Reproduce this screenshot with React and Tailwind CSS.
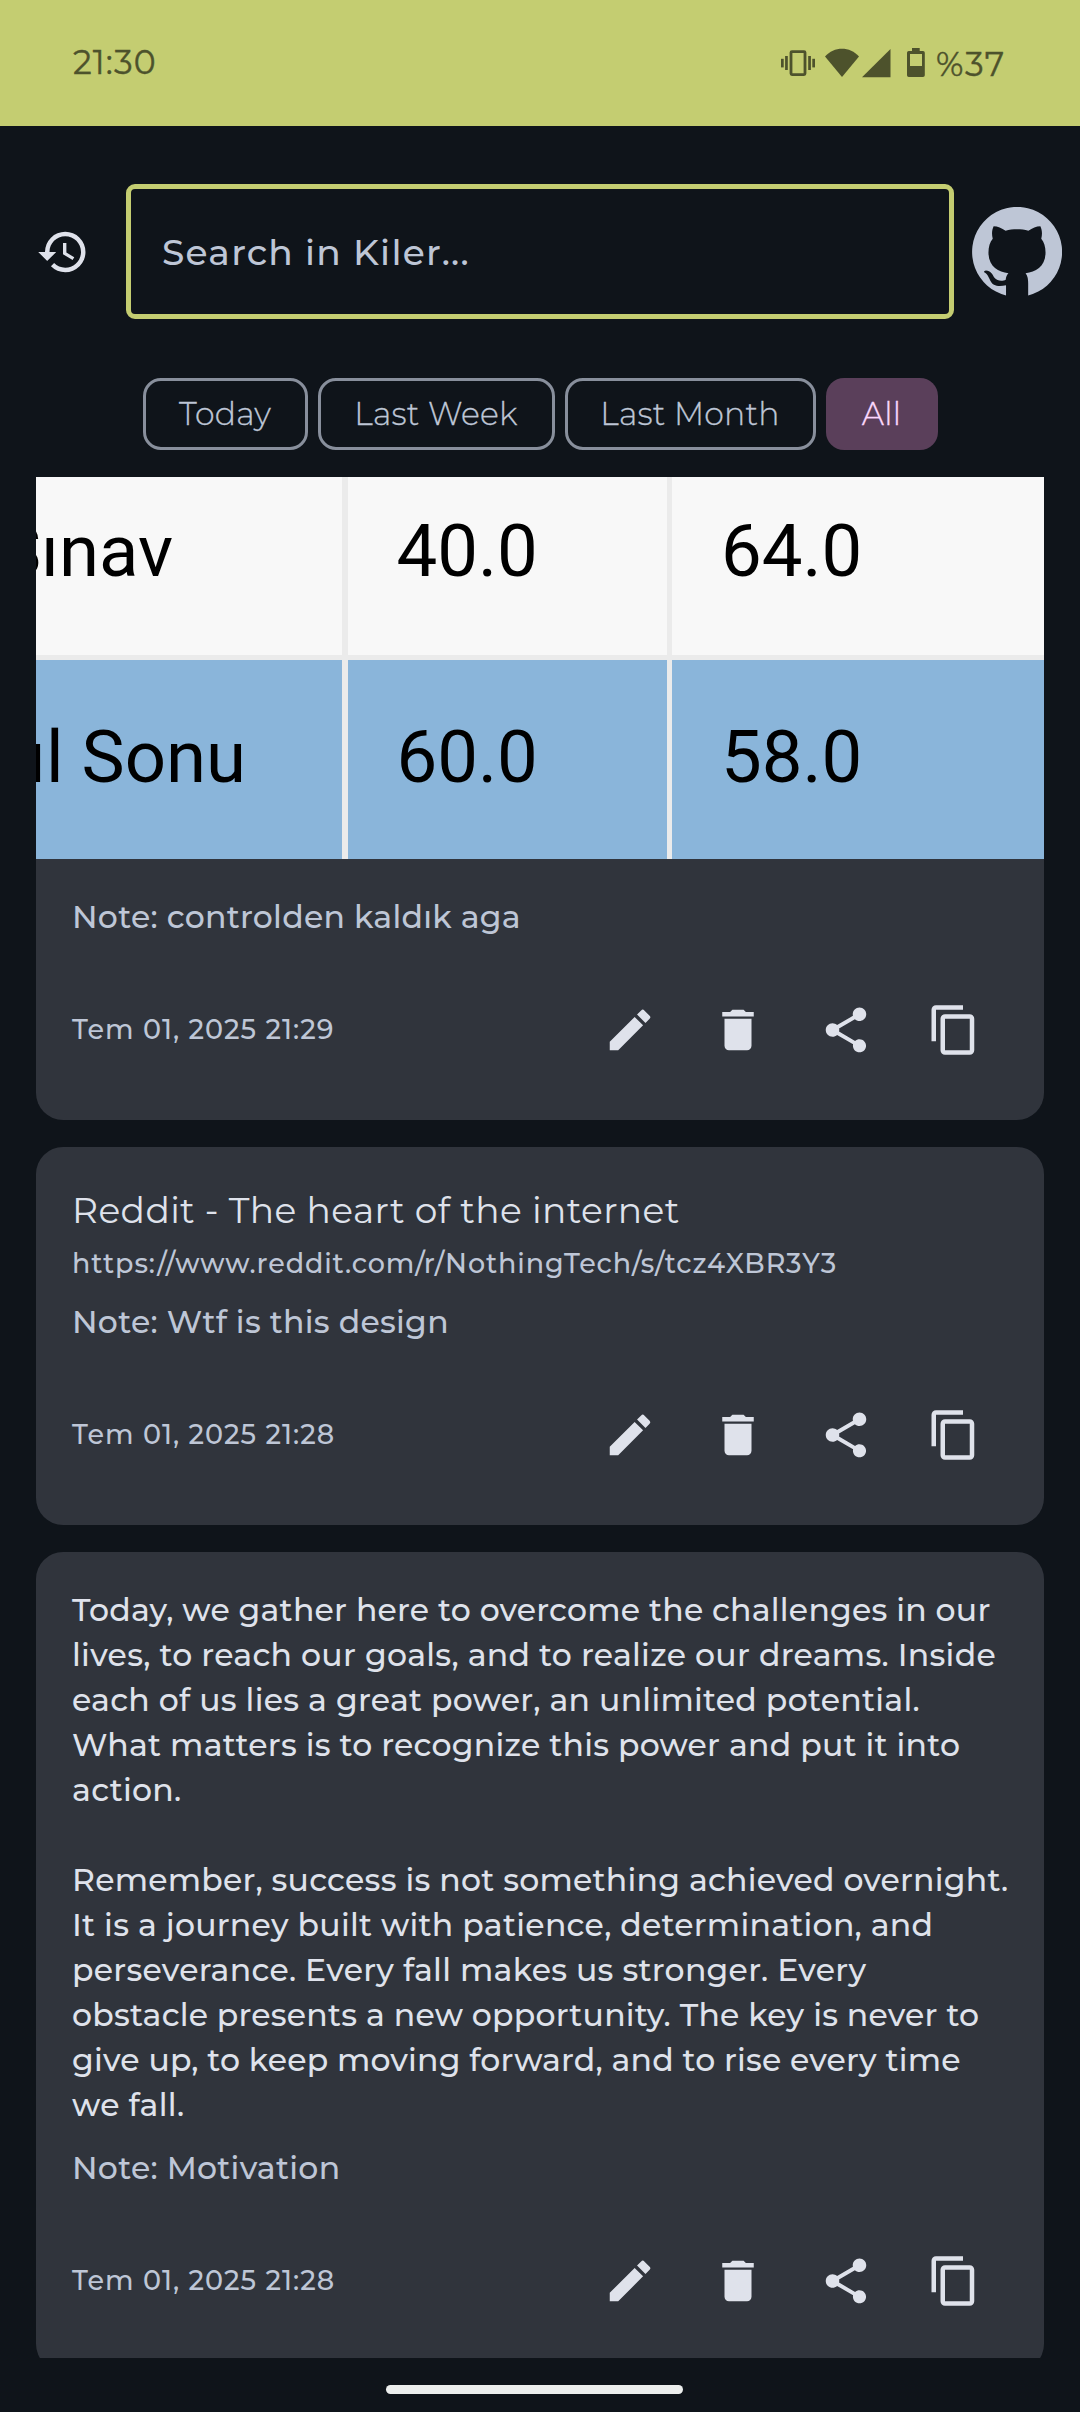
import React from "react";
import { MdContentCopy, MdDelete, MdEdit, MdHistory, MdShare } from "react-icons/md";

function StatusBar() {
  return (
    <header className="flex h-[126px] items-start justify-between bg-[#c4cd71] pl-[73px] text-[33px] leading-[42px] text-[#4d522c] [-webkit-text-stroke-width:0.4px]">
      <span className="mt-[41px] tracking-[1.1px]">21:30</span>
      <div className="flex w-[299px] items-start">
        <svg className="mt-12 h-[30px] w-[34px]" viewBox="0 0 34 30" fill="currentColor">
          <rect x="10" y="3.6" width="14" height="23" rx="1" fill="none" stroke="currentColor" strokeWidth="2.8" />
          <rect x="0" y="10.8" width="2.7" height="8.6" />
          <rect x="4.1" y="8" width="2.7" height="14" />
          <rect x="27.2" y="8" width="2.7" height="14" />
          <rect x="31.3" y="10.8" width="2.7" height="8.6" />
        </svg>
        <svg className="mt-12 ml-2.5 h-[30px] w-[34px]" viewBox="0 0 34 30" fill="currentColor">
          <path d="M0 8.6C9-1.9 25-1.9 34 8.6L17 29Z" />
        </svg>
        <svg className="mt-12 ml-[3px] h-[30px] w-[29px]" viewBox="0 0 29 30" fill="currentColor">
          <path d="M0 29.3 28.5 1V29.3Z" />
        </svg>
        <svg className="mt-12 ml-4 h-[30px] w-[18px]" viewBox="0 0 18 30" fill="currentColor" fillRule="evenodd">
          <path d="M5 0H12.7V3H16A1.8 1.8 0 0 1 17.8 4.8V27.2A1.8 1.8 0 0 1 16 29H1.8A1.8 1.8 0 0 1 0 27.2V4.8A1.8 1.8 0 0 1 1.8 3H5ZM3 6V18H15V6Z" />
        </svg>
        <span className="mt-[43px] ml-[11px] tracking-[1.4px]">%37</span>
      </div>
    </header>
  );
}

function GitHubMark() {
  return (
    <svg className="h-[90px] w-[90px]" viewBox="0 0 90.2 90.2" fill="currentColor">
      <path d="M34.1 88.7A45.1 45.1 0 1 1 56.3 88.7V77C56.3 72.5 56 69 53.7 66.3C64 65.2 73.7 59.5 73.7 45.5C73.7 40 72.3 35.3 69.4 31.8C70.6 27.5 70.3 23 68.5 19.3C64.5 19.4 60.5 21 56.5 23.8C49.5 21.8 40.7 21.8 33.7 23.8C29.7 21 25.7 19.4 21.7 19.3C19.9 23 19.6 27.5 20.8 31.8C17.9 35.3 16.5 40 16.5 45.5C16.5 59.5 26.2 65.2 36.5 66.3C35 68 34 70 33.8 73C31 74.3 25.6 74.9 22.3 70.7C20.8 68 18.7 63.7 14 63.7C11.6 64.2 11.6 65.2 13.5 66.2C17.6 69.2 17.6 75.5 22 78C25.3 79.8 30 79.4 34.1 78.5Z" />
    </svg>
  );
}

function SearchRow() {
  return (
    <div className="mt-[58px] flex h-[135px] items-center">
      <MdHistory className="ml-9 size-[54px] text-[#dfe2eb]" />
      <div className="ml-9 flex h-full w-[828px] items-center rounded-[9px] border-5 border-[#c4cd71] pl-[31px] text-[36px] leading-[54px] font-medium tracking-[1.25px] text-[#bec6d6]">
        Search in Kiler...
      </div>
      <div className="ml-[18px] text-[#bec6d6]">
        <GitHubMark />
      </div>
    </div>
  );
}

const CHIP = "flex h-[72px] items-center justify-center rounded-[18px] text-[31.5px] leading-[45px] font-light tracking-[0.225px] [-webkit-text-stroke-width:0.3px]";

function Filters() {
  return (
    <div className="mt-[59px] flex justify-center gap-2.5">
      <button className={`${CHIP} w-[165px] border-3 border-[#888f9c] text-[#bec6d6]`}>Today</button>
      <button className={`${CHIP} w-[237px] border-3 border-[#888f9c] text-[#bec6d6]`}>Last Week</button>
      <button className={`${CHIP} w-[251px] border-3 border-[#888f9c] text-[#bec6d6]`}>Last Month</button>
      <button className={`${CHIP} w-[112px] bg-[#5a3f5a] text-[#fbd7fc]`}>All</button>
    </div>
  );
}

function GradesImage() {
  return (
    <div className="grid h-[382px] grid-cols-[306px_319px_372px] grid-rows-[178px_199px] gap-x-[5.5px] gap-y-[5px] overflow-hidden bg-[#ebebeb] font-['Roboto',sans-serif] text-[72.5px] leading-[86px] whitespace-nowrap text-black">
      <div className="flex justify-end overflow-hidden bg-[#f8f8f8] pt-8 pr-[169px]">
        <span className="blur-[0.7px]">Sınav</span>
      </div>
      <div className="bg-[#f8f8f8] pt-8 pl-[49px]"><span className="inline-block blur-[0.7px]">40.0</span></div>
      <div className="bg-[#f8f8f8] pt-8 pl-[49px]"><span className="inline-block blur-[0.7px]">64.0</span></div>
      <div className="flex justify-end overflow-hidden bg-[#8ab5da] pt-[55px] pr-[96px]">
        <span className="blur-[0.7px]">ıl Sonu</span>
      </div>
      <div className="bg-[#8ab5da] pt-[55px] pl-[49px]"><span className="inline-block blur-[0.7px]">60.0</span></div>
      <div className="bg-[#8ab5da] pt-[55px] pl-[49px]"><span className="inline-block blur-[0.7px]">58.0</span></div>
    </div>
  );
}

function Note({ children }) {
  return <p className="text-[31.5px] leading-[45px] font-medium tracking-[0.28px] text-[#bec6d6]">{children}</p>;
}

function CardFooter({ date }) {
  return (
    <div className="mt-9 flex h-[108px] items-center justify-between">
      <span className="text-[27px] leading-9 font-medium tracking-[1.05px] text-[#bec6d6]">{date}</span>
      <div className="flex text-[#dfe2eb]">
        {[MdEdit, MdDelete, MdShare, MdContentCopy].map((Icon, i) => (
          <button key={i} className="flex size-[108px] items-center justify-center">
            <Icon className="size-[54px]" />
          </button>
        ))}
      </div>
    </div>
  );
}

const SPEECH = [
  ["Today, we gather here to overcome the challenges in our", "tracking-[0.225px]"],
  ["lives, to reach our goals, and to realize our dreams. Inside", "tracking-[0.3px]"],
  ["each of us lies a great power, an unlimited potential.", "tracking-[0.28px]"],
  ["What matters is to recognize this power and put it into", "tracking-[0.25px]"],
  ["action.", "tracking-[0.3px]"],
  ["", ""],
  ["Remember, success is not something achieved overnight.", "tracking-[0.25px]"],
  ["It is a journey built with patience, determination, and", "tracking-[0.265px]"],
  ["perseverance. Every fall makes us stronger. Every", "tracking-[0.275px]"],
  ["obstacle presents a new opportunity. The key is never to", "tracking-[0.225px]"],
  ["give up, to keep moving forward, and to rise every time", "tracking-[0.2px]"],
  ["we fall.", "tracking-[0.3px]"],
];

export default function App() {
  return (
    <div className="flex h-[2412px] w-[1080px] flex-col overflow-hidden bg-[#0f141a] font-['Montserrat','Inter',sans-serif]">
      <StatusBar />
      <SearchRow />
      <Filters />
      <main className="mt-[27px] flex h-[1881px] shrink-0 flex-col gap-[27px] overflow-hidden px-9">
        <section className="shrink-0 overflow-hidden rounded-b-[27px] bg-[#30343c]">
          <GradesImage />
          <div className="p-9">
            <Note>Note: controlden kaldık aga</Note>
            <CardFooter date="Tem 01, 2025 21:29" />
          </div>
        </section>
        <section className="shrink-0 rounded-[27px] bg-[#30343c] p-9">
          <h2 className="text-[36px] leading-[54px] tracking-[0.4px] text-[#dfe2eb]">Reddit - The heart of the internet</h2>
          <p className="mt-[9px] mb-[18px] text-[27px] leading-9 font-medium tracking-[0.9px] text-[#bec6d6]">
            https://www.reddit.com/r/NothingTech/s/tcz4XBR3Y3
          </p>
          <Note>Note: Wtf is this design</Note>
          <CardFooter date="Tem 01, 2025 21:28" />
        </section>
        <section className="shrink-0 rounded-[27px] bg-[#30343c] p-9">
          <div className="mb-[18px] text-[31.5px] leading-[45px] font-medium whitespace-nowrap text-[#dfe2eb]">
            {SPEECH.map(([line, tracking], i) => (
              <p key={i} className={`h-[45px] ${tracking}`}>{line}</p>
            ))}
          </div>
          <Note>Note: Motivation</Note>
          <CardFooter date="Tem 01, 2025 21:28" />
        </section>
      </main>
      <div className="mt-[27px] ml-[386px] h-[9px] w-[297px] shrink-0 rounded-full bg-[#eceeed]" />
    </div>
  );
}
